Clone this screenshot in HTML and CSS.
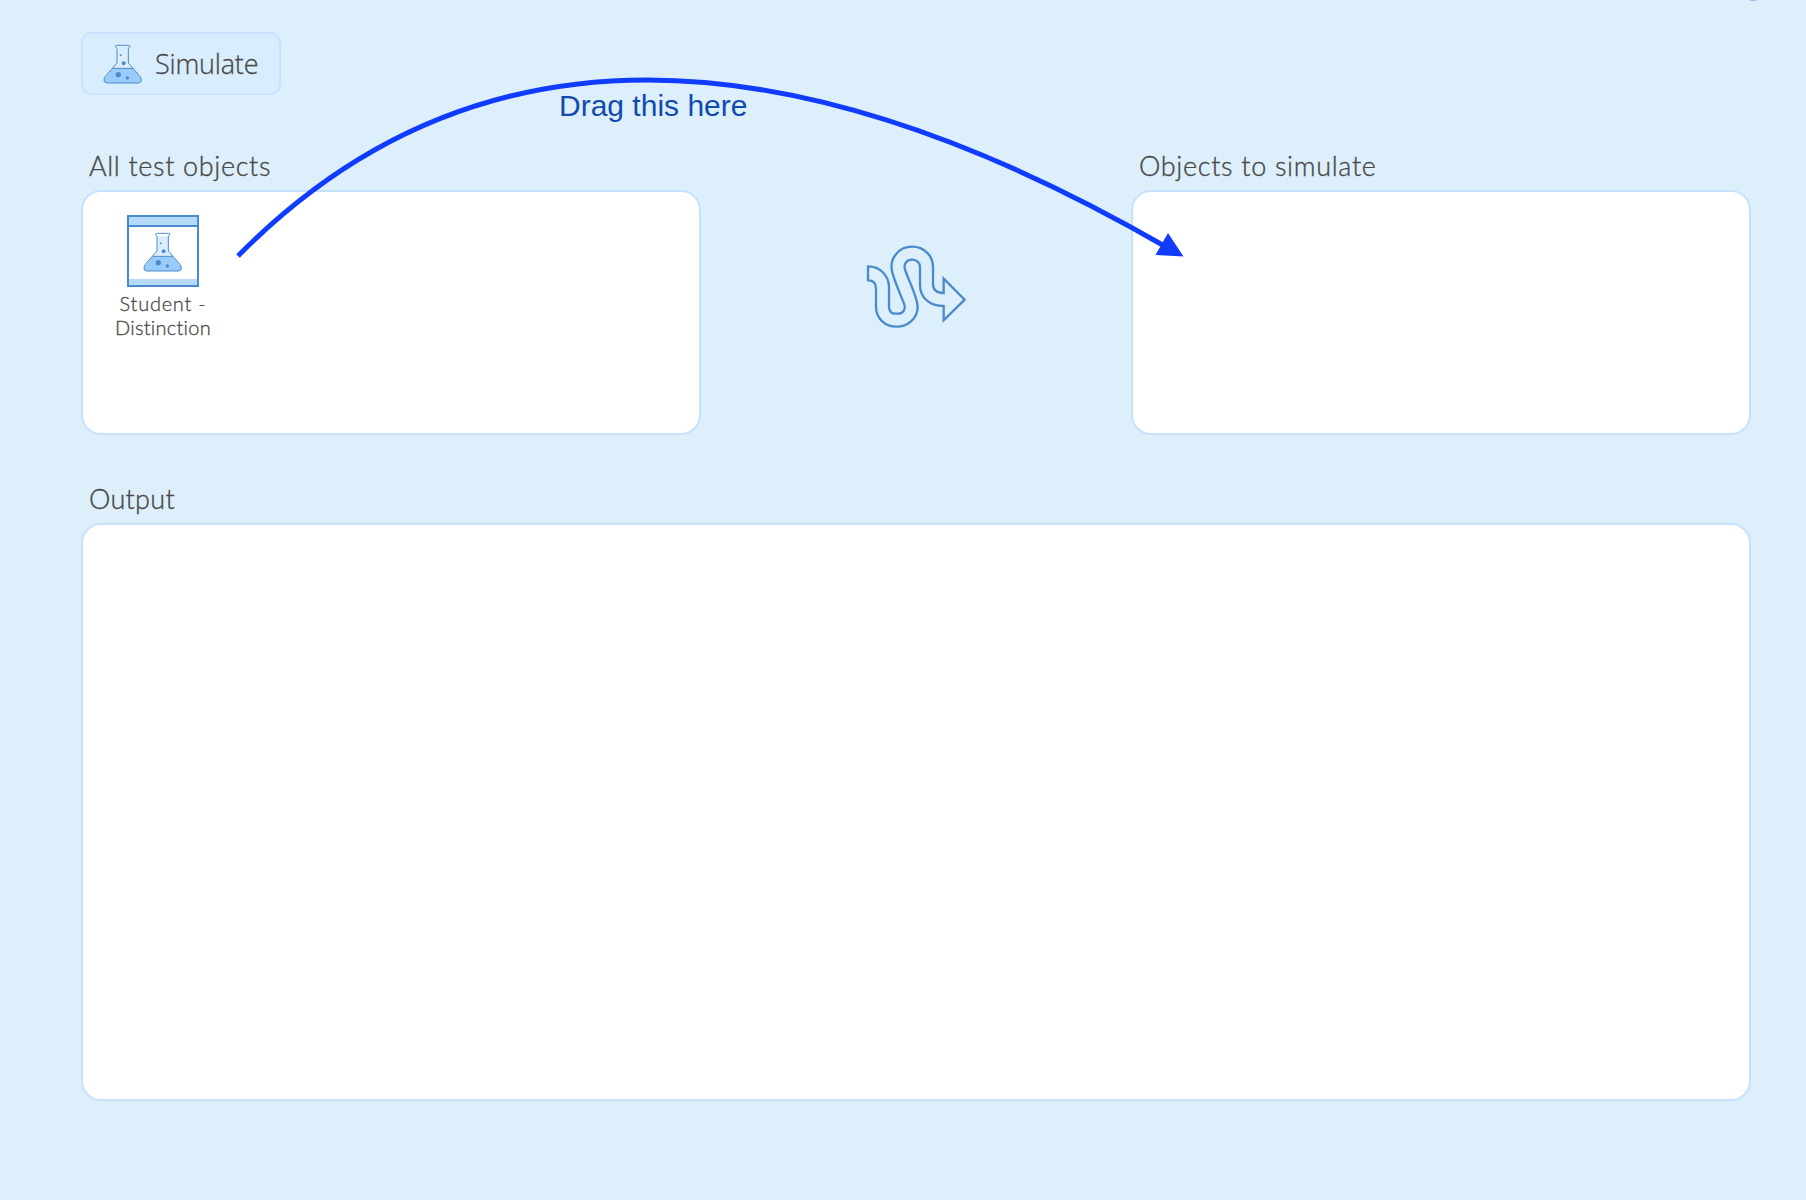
FILE: index.html
```html
<!DOCTYPE html>
<html lang="en">
<head>
<meta charset="utf-8">
<title>Simulate</title>
<link rel="stylesheet" href="styles.css">
</head>
<body>
<svg class="defs" aria-hidden="true">
  <symbol id="flask" viewBox="100 70 120 120">
    <path d="M142 83V127L106 171Q99 187 112 187H206Q219 187 213 172L176 127V83Z" fill="#dceefb"/>
    <path d="M128 143H190L213 172Q219 187 206 187H112Q99 187 106 171Z" fill="#99ccfb"/>
    <path d="M142 83V127L106 168Q98 184 111 187H207Q220 184 212 168L176 127V83M128 143H190M142 83Q132 74 143 74H175Q186 74 176 83" fill="none" stroke="#4a8ccb" stroke-width="3"/>
    <circle cx="153" cy="104" r="3" fill="#4a8ccb"/><circle cx="162" cy="128" r="6" fill="#4a8ccb"/>
    <circle cx="146" cy="162" r="8" fill="#4a8ccb"/><circle cx="173" cy="172" r="5" fill="#4a8ccb"/>
  </symbol>
</svg>
<main class="page">
  <button class="simulate"><svg class="flask"><use href="#flask"/></svg><span>Simulate</span></button>
  <div class="transfer">
    <section class="group">
      <h2 class="label all">All test objects</h2>
      <div class="panel">
        <div class="object">
          <div class="tile"><svg class="flask"><use href="#flask"/></svg></div>
          <div class="name"><span class="first">Student -</span><br><span class="second">Distinction</span></div>
        </div>
      </div>
    </section>
    <svg class="wiggle" viewBox="0 0 390 330"><path d="M54 109C90 109 117 137 117 172V230Q117 251 138 251H143C161 251 168 236 162 221C150 190 136 160 127 128C116 86 145 50 187 50C222 50 249 77 249 111V162C249 180 260 189 281 189V146L344 209L281 271V228C240 228 210 204 210 165V111C210 99 201 89 187 89C170 89 160 102 165 118C174 149 203 200 203 232C203 265 173 290 140 290C105 290 78 265 78 230V175C78 160 69 151 54 151Z"/></svg>
    <section class="group">
      <h2 class="label target">Objects to simulate</h2>
      <div class="panel"></div>
    </section>
  </div>
  <section class="output">
    <h2 class="label out">Output</h2>
    <div class="panel"></div>
  </section>
</main>
<svg class="hint-arrow" viewBox="0 0 1806 300"><path class="arc" d="M238 256Q581 -92 1168 248"/><path class="head" d="M1168 233L1183.500 256.500L1155.500 255Z"/></svg>
<div class="hint">Drag this here</div>
<div class="dot"></div>
</body>
</html>
```
FILE: styles.css
```css
* { box-sizing: border-box; }
body { margin: 0; height: 1200px; overflow: hidden; background: #deeffc; color: #484848; font-family: Lato, sans-serif; font-variant-ligatures: none; position: relative; }
.defs { position: absolute; width: 0; height: 0; }
.page { padding: 32px 55px 0 81px; }
.simulate { display: flex; align-items: center; width: 200px; height: 63px; padding: 0 0 0 20px; gap: 12px; border: 2px solid #c6e2ff; border-radius: 10px; background: #d8eeff; color: #484848; font: 300 27px "Open Sans", sans-serif; letter-spacing: -0.2px; -webkit-text-stroke: 0.3px #484848; }
.flask { width: 40px; height: 40px; display: block; flex: none; }
.transfer { display: flex; justify-content: space-between; margin-top: 54px; }
.group { width: 620px; }
.label { margin: 0; height: 41px; padding-left: 8px; font-size: 27px; font-weight: 300; line-height: 34px; white-space: nowrap; -webkit-text-stroke: 0.35px #484848; }
.all { letter-spacing: 0.65px; }
.target { letter-spacing: 0.68px; }
.out { letter-spacing: 0.3px; }
.panel { height: 245px; border: 2px solid #c6e2ff; border-radius: 20px; background: #fff; }
.object { width: 160px; padding-top: 23px; display: flex; flex-direction: column; align-items: center; }
.tile { width: 72px; height: 72px; border: 2px solid #4a8ccb; background: linear-gradient(#b5dafa 0 8px, #4a8ccb 8px 10px, #fff 10px 62px, #b5dafa 62px); display: flex; justify-content: center; padding-top: 15px; }
.name { margin-top: 4px; font-size: 20px; font-weight: 300; line-height: 24px; text-align: center; white-space: nowrap; -webkit-text-stroke: 0.3px #484848; }
.first { letter-spacing: 0.75px; }
.second { letter-spacing: 0.25px; }
.wiggle { width: 130px; height: 110px; margin: 81px 3px 0 0; }
.wiggle path { fill: none; stroke: #4a8ccb; stroke-width: 7; }
.output { margin-top: 47px; }
.output .panel { height: 578px; }
.hint-arrow { position: absolute; left: 0; top: 0; width: 1806px; height: 300px; pointer-events: none; }
.arc { fill: none; stroke: #103cff; stroke-width: 5; }
.head { fill: #103cff; }
.hint { position: absolute; left: 559px; top: 89px; font: 30px/34px "Liberation Sans", sans-serif; color: #104bad; white-space: nowrap; }
.dot { position: absolute; left: 1743px; top: -19px; width: 20px; height: 20px; border-radius: 50%; background: #8cb8e6; }
```
